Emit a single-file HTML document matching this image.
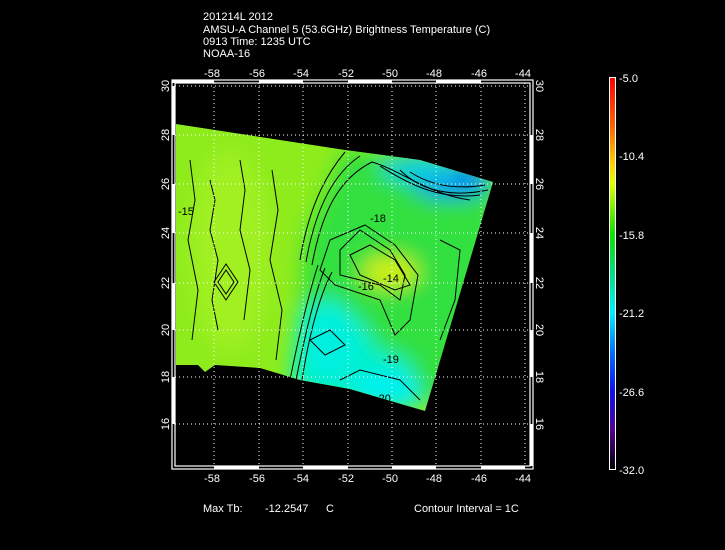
<!DOCTYPE html>
<html><head><style>
html,body{margin:0;padding:0;background:#000;}
svg{display:block;font-family:"Liberation Sans",sans-serif;}
</style></head><body>
<svg width="725" height="550" viewBox="0 0 725 550" xmlns="http://www.w3.org/2000/svg">
<defs>
<linearGradient id="cb" x1="0" y1="0" x2="0" y2="1">
<stop offset="0" stop-color="#ff0000"/>
<stop offset="0.12" stop-color="#ff6000"/>
<stop offset="0.22" stop-color="#ffd000"/>
<stop offset="0.27" stop-color="#e0ff00"/>
<stop offset="0.40" stop-color="#10e000"/>
<stop offset="0.50" stop-color="#00e080"/>
<stop offset="0.60" stop-color="#00f0ff"/>
<stop offset="0.70" stop-color="#0070ff"/>
<stop offset="0.80" stop-color="#1010f0"/>
<stop offset="0.90" stop-color="#500090"/>
<stop offset="1" stop-color="#000000"/>
</linearGradient>
<clipPath id="dc"><path d="M176,124 L345,150 L420,160 L493,182 L425,411 L350,389 L300,380 L260,368 L215,365 L205,372 L198,365 L176,365 Z"/></clipPath>
<filter id="bl" x="-50%" y="-50%" width="200%" height="200%"><feGaussianBlur stdDeviation="10"/></filter>
</defs>
<text font-size="11" fill="#fff">
<tspan x="203" y="20">201214L 2012</tspan>
<tspan x="203" y="33">AMSU-A Channel 5 (53.6GHz) Brightness Temperature (C)</tspan>
<tspan x="203" y="45">0913 Time: 1235 UTC</tspan>
<tspan x="203" y="57">NOAA-16</tspan>
</text>
<g clip-path="url(#dc)">
<rect x="170" y="110" width="340" height="320" fill="#8eec1c"/>
<g filter="url(#bl)">
<path d="M305,240 L345,150 L500,170 L480,400 L295,400 Z" fill="#30e040"/>
<path d="M300,310 L330,295 L360,320 L380,350 L410,360 L420,410 L330,400 L290,385 Z" fill="#00f0c8"/>
<ellipse cx="330" cy="345" rx="28" ry="35" fill="#00f0e0"/>
<ellipse cx="385" cy="390" rx="35" ry="20" fill="#00f0f0"/>
<ellipse cx="450" cy="180" rx="40" ry="18" fill="#0090f0"/>
<ellipse cx="420" cy="168" rx="40" ry="14" fill="#10d0e0"/>
<ellipse cx="390" cy="272" rx="28" ry="16" fill="#d0f010"/>
<ellipse cx="230" cy="250" rx="40" ry="100" fill="#a0f020"/>
</g>
<g fill="none" stroke="#000" stroke-width="1">
<path d="M300,260 C310,200 330,170 345,152"/>
<path d="M306,262 C316,205 336,172 360,156"/>
<path d="M312,265 C322,210 340,178 372,162 C400,170 430,195 470,200"/>
<path d="M290,380 C300,330 310,290 318,265"/>
<path d="M296,380 C306,330 316,290 325,268"/>
<path d="M302,380 C310,330 320,295 332,272"/>
<path d="M380,166 C410,185 440,200 480,195"/>
<path d="M400,170 C420,190 450,198 488,190"/>
<path d="M410,172 C430,185 455,190 485,185"/>
<path d="M340,250 L360,230 L390,250 L405,275 L400,300 L380,285 L340,275 Z"/>
<path d="M350,255 L370,245 L395,260 L410,285 L395,290 L360,275 Z"/>
<path d="M330,240 L365,225 L395,245 L418,275 L410,320 L395,335 L380,300 L335,285 L320,270 Z"/>
<path d="M310,340 L330,330 L345,345 L325,355 Z"/>
<path d="M340,380 L360,370 L400,380 L420,400"/>
<path d="M210,180 L215,200 L210,230 L218,260 L212,300 L218,330"/>
<path d="M240,160 L245,190 L240,230 L250,270 L244,320"/>
<path d="M272,170 L278,210 L270,260 L282,310 L276,360"/>
<path d="M190,160 L195,200 L188,240 L198,290 L192,340"/>
<path d="M226,270 L234,282 L226,294 L218,282 Z"/>
<path d="M226,264 L238,282 L226,300 L214,282 Z"/>
<path d="M440,240 L460,250 L455,300 L440,340"/>
</g>
<g font-size="11" fill="#000">
<text x="370" y="222">-18</text><text x="383" y="282">-14</text><text x="358" y="290">-16</text>
<text x="383" y="363">-19</text><text x="375" y="402">-20</text><text x="178" y="215">-15</text>
</g>
</g>
<g stroke="#fff" stroke-width="1" stroke-dasharray="1,3">
<path d="M214,83V466M259,83V466M303,83V466M348,83V466M392,83V466M436,83V466M481,83V466M525,83V466"/>
<path d="M175,86H529M175,135H529M175,184H529M175,233H529M175,283H529M175,330H529M175,377H529M175,424H529"/>
</g>
<g fill="none" stroke="#fff" stroke-width="1.2">
<rect x="172" y="80" width="361" height="389"/>
<rect x="175" y="83" width="355" height="383"/>
</g>
<g fill="#fff">
<rect x="172" y="80" width="42" height="3"/><rect x="259" y="80" width="44" height="3"/><rect x="348" y="80" width="44" height="3"/><rect x="436" y="80" width="45" height="3"/>
<rect x="214" y="466" width="45" height="3"/><rect x="303" y="466" width="45" height="3"/><rect x="392" y="466" width="44" height="3"/><rect x="481" y="466" width="44" height="3"/>
<rect x="172" y="86" width="3" height="49"/><rect x="172" y="184" width="3" height="49"/><rect x="172" y="283" width="3" height="47"/><rect x="172" y="377" width="3" height="47"/>
<rect x="530" y="135" width="3" height="49"/><rect x="530" y="233" width="3" height="50"/><rect x="530" y="330" width="3" height="47"/><rect x="530" y="424" width="3" height="42"/>
</g>
<g font-size="11" fill="#fff" text-anchor="middle">
<text x="212" y="77">-58</text><text x="257" y="77">-56</text><text x="301" y="77">-54</text><text x="346" y="77">-52</text><text x="390" y="77">-50</text><text x="434" y="77">-48</text><text x="479" y="77">-46</text><text x="523" y="77">-44</text>
<text x="212" y="482">-58</text><text x="257" y="482">-56</text><text x="301" y="482">-54</text><text x="346" y="482">-52</text><text x="390" y="482">-50</text><text x="434" y="482">-48</text><text x="479" y="482">-46</text><text x="523" y="482">-44</text>
</g>
<g font-size="11" fill="#fff" text-anchor="middle">
<text transform="translate(169,86) rotate(-90)">30</text><text transform="translate(169,135) rotate(-90)">28</text><text transform="translate(169,184) rotate(-90)">26</text><text transform="translate(169,233) rotate(-90)">24</text><text transform="translate(169,283) rotate(-90)">22</text><text transform="translate(169,330) rotate(-90)">20</text><text transform="translate(169,377) rotate(-90)">18</text><text transform="translate(169,424) rotate(-90)">16</text>
<text transform="translate(536,86) rotate(90)">30</text><text transform="translate(536,135) rotate(90)">28</text><text transform="translate(536,184) rotate(90)">26</text><text transform="translate(536,233) rotate(90)">24</text><text transform="translate(536,283) rotate(90)">22</text><text transform="translate(536,330) rotate(90)">20</text><text transform="translate(536,377) rotate(90)">18</text><text transform="translate(536,424) rotate(90)">16</text>
</g>
<rect x="609.5" y="77.5" width="6" height="392" fill="url(#cb)" stroke="#fff" stroke-width="1"/>
<g font-size="11" fill="#fff">
<text x="619" y="82">-5.0</text><text x="619" y="160">-10.4</text><text x="619" y="239">-15.8</text><text x="619" y="317">-21.2</text><text x="619" y="396">-26.6</text><text x="619" y="474">-32.0</text>
</g>
<g font-size="11" fill="#fff">
<text x="203" y="512">Max Tb:</text><text x="265" y="512">-12.2547</text><text x="326" y="512">C</text><text x="414" y="512">Contour Interval = 1C</text>
</g>
</svg>
</body></html>
